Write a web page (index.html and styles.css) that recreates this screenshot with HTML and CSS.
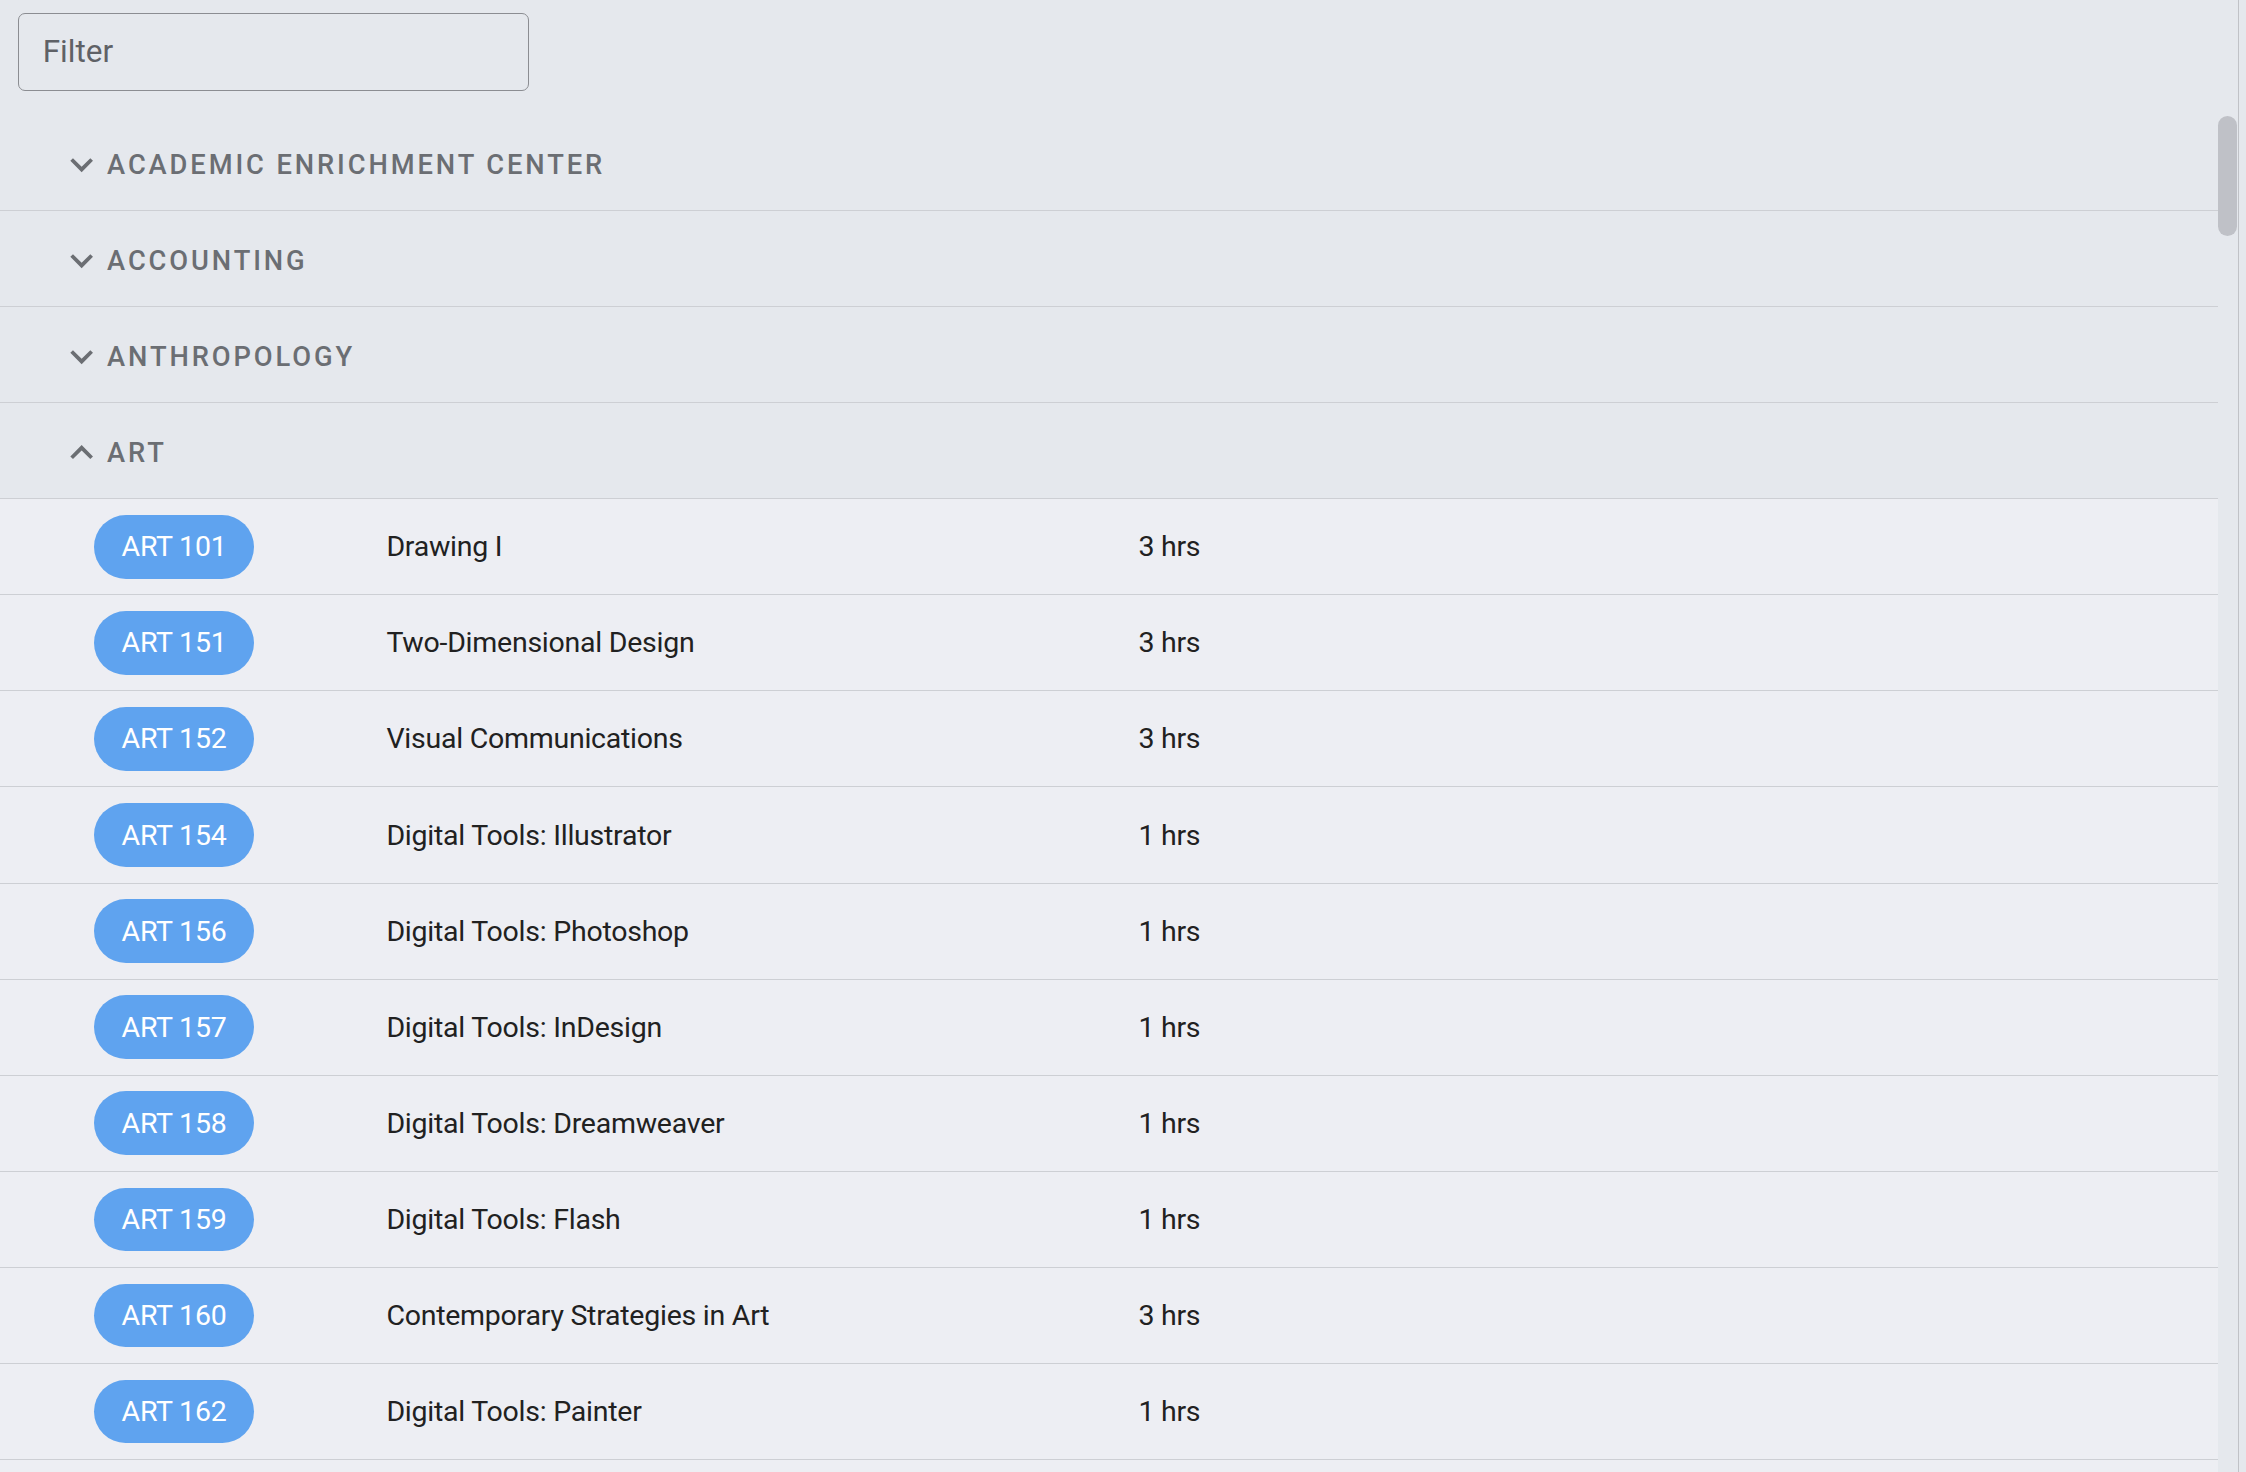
FILE: index.html
```html
<!DOCTYPE html>
<html lang="en">
<head>
<meta charset="utf-8">
<title>Courses</title>
<link rel="stylesheet" href="styles.css">
</head>
<body>
<div class="app">
  <div class="filter-bar">
    <input class="filter" type="text" placeholder="Filter">
  </div>
  <div class="body">
    <div class="list">
      <div class="dept">
        <svg class="chev" viewBox="0 0 24 24"><path d="M16.59 8.59L12 13.17 7.41 8.59 6 10l6 6 6-6z"/></svg>
        <span class="dept-name">Academic Enrichment Center</span>
      </div>
      <div class="dept">
        <svg class="chev" viewBox="0 0 24 24"><path d="M16.59 8.59L12 13.17 7.41 8.59 6 10l6 6 6-6z"/></svg>
        <span class="dept-name">Accounting</span>
      </div>
      <div class="dept">
        <svg class="chev" viewBox="0 0 24 24"><path d="M16.59 8.59L12 13.17 7.41 8.59 6 10l6 6 6-6z"/></svg>
        <span class="dept-name">Anthropology</span>
      </div>
      <div class="dept">
        <svg class="chev" viewBox="0 0 24 24"><path d="M12 8l-6 6 1.41 1.41L12 10.83l4.59 4.58L18 14z"/></svg>
        <span class="dept-name">Art</span>
      </div>
      <div class="course"><span class="chip">ART 101</span><span class="title">Drawing I</span><span class="hrs">3 hrs</span></div>
      <div class="course"><span class="chip">ART 151</span><span class="title">Two-Dimensional Design</span><span class="hrs">3 hrs</span></div>
      <div class="course"><span class="chip">ART 152</span><span class="title">Visual Communications</span><span class="hrs">3 hrs</span></div>
      <div class="course"><span class="chip">ART 154</span><span class="title">Digital Tools: Illustrator</span><span class="hrs">1 hrs</span></div>
      <div class="course"><span class="chip">ART 156</span><span class="title">Digital Tools: Photoshop</span><span class="hrs">1 hrs</span></div>
      <div class="course"><span class="chip">ART 157</span><span class="title">Digital Tools: InDesign</span><span class="hrs">1 hrs</span></div>
      <div class="course"><span class="chip">ART 158</span><span class="title">Digital Tools: Dreamweaver</span><span class="hrs">1 hrs</span></div>
      <div class="course"><span class="chip">ART 159</span><span class="title">Digital Tools: Flash</span><span class="hrs">1 hrs</span></div>
      <div class="course"><span class="chip">ART 160</span><span class="title">Contemporary Strategies in Art</span><span class="hrs">3 hrs</span></div>
      <div class="course"><span class="chip">ART 162</span><span class="title">Digital Tools: Painter</span><span class="hrs">1 hrs</span></div>
      <div class="course course-tail"></div>
    </div>
    <div class="track"><div class="thumb"></div></div>
  </div>
</div>
</body>
</html>
```
FILE: styles.css
```css
html, body {
  margin: 0;
  padding: 0;
}
body {
  background: #e5e8ed;
  font-family: Roboto, "Liberation Sans", sans-serif;
  overflow: hidden;
}
.app {
  width: 2238px;
  height: 1472px;
  border-right: 1.5px solid #c0c2c7;
  display: flex;
  flex-direction: column;
  overflow: hidden;
}
.filter-bar {
  padding: 12.5px 0 0 18.3px;
}
.filter {
  box-sizing: border-box;
  width: 511px;
  height: 78.5px;
  border: 1.5px solid #8b8d92;
  border-radius: 7px;
  background: transparent;
  padding: 0 0 0 23.4px;
  font-family: Roboto, "Liberation Sans", sans-serif;
  font-size: 31.5px;
  color: #212121;
  outline: none;
}
.filter::placeholder {
  color: #5f6166;
  opacity: 1;
}
.body {
  flex: 1;
  min-height: 0;
  display: flex;
  margin-top: 23.8px;
}
.list {
  flex: 1;
  min-width: 0;
}
.dept {
  box-sizing: border-box;
  height: 96.1px;
  border-bottom: 1.5px solid #cdcfd4;
  display: flex;
  align-items: center;
  padding-left: 59.4px;
  padding-top: 5px;
}
.chev {
  width: 45.3px;
  height: 45.3px;
  fill: #6b6e73;
  flex: none;
}
.dept-name {
  margin-left: 2.4px;
  font-size: 27.3px;
  font-weight: 500;
  letter-spacing: 2.9px;
  text-transform: uppercase;
  color: #6b6e73;
}
.course {
  box-sizing: border-box;
  height: 96.1px;
  border-bottom: 1.5px solid #cdcfd4;
  background: #edeef3;
  display: flex;
  align-items: center;
  padding-left: 94px;
  font-size: 28.5px;
  letter-spacing: -0.25px;
  color: #212121;
}
.chip {
  flex: none;
  width: 160px;
  height: 63.7px;
  border-radius: 32px;
  background: #5fa3ef;
  color: #ffffff;
  display: flex;
  align-items: center;
  justify-content: center;
}
.title {
  flex: none;
  width: 752px;
  margin-left: 132.4px;
}
.hrs {
  flex: none;
}
.track {
  width: 20px;
  flex: none;
}
.thumb {
  margin-top: 1.5px;
  width: 19.3px;
  height: 120px;
  border-radius: 10px;
  background: #bfc1c7;
}
```
